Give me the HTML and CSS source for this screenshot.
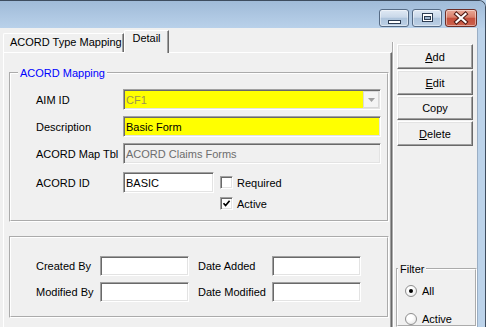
FILE: index.html
```html
<!DOCTYPE html>
<html>
<head>
<meta charset="utf-8">
<title>ACORD Type Mapping</title>
<link rel="stylesheet" href="styles.css">
</head>
<body>
<div class="window">
  <div class="titlebar">
    <div class="capbtn min"><svg width="30" height="18" viewBox="0 0 30 18"><rect x="9.5" y="11.5" width="12" height="3" fill="#fff" stroke="#2c3c52"/></svg></div>
    <div class="capbtn max"><svg width="30" height="18" viewBox="0 0 30 18"><rect x="10.5" y="4.5" width="10" height="8" fill="#fff" stroke="#2c3c52"/><rect x="12.5" y="7.5" width="6" height="3" fill="#9fb6cf" stroke="#2c3c52"/></svg></div>
    <div class="capbtn close"><svg width="32" height="18" viewBox="0 0 32 18"><path d="M11.5 5 L20.5 13 M20.5 5 L11.5 13" stroke="#4e1a14" stroke-width="4.2" stroke-linecap="square"/><path d="M11.5 5 L20.5 13 M20.5 5 L11.5 13" stroke="#fff" stroke-width="2.2" stroke-linecap="square"/></svg></div>
  </div>
  <div class="main">
    <div class="client">
      <div class="leftcol">
        <div class="tabs">
          <div class="tab inactive">ACORD Type Mapping</div>
          <div class="tab active">Detail</div>
        </div>
        <div class="panel">
          <fieldset class="group mapping">
            <legend>ACORD Mapping</legend>
            <div class="gbody">
              <div class="row">
                <span class="lbl">AIM ID</span>
                <div class="field wide yellow combo"><span class="ctext">CF1</span><span class="drop"><svg width="7" height="4" viewBox="0 0 7 4"><path d="M0 0 H7 L3.5 4 Z" fill="#a0a0a0"/></svg></span></div>
              </div>
              <div class="row">
                <span class="lbl">Description</span>
                <div class="field wide yellow">Basic Form</div>
              </div>
              <div class="row">
                <span class="lbl">ACORD Map Tbl</span>
                <div class="field wide ro">ACORD Claims Forms</div>
              </div>
              <div class="row r4">
                <span class="lbl">ACORD ID</span>
                <div class="field idfield">BASIC</div>
                <span class="chk"></span><span class="chklbl">Required</span>
              </div>
              <div class="row r5">
                <span class="chk checked"><svg width="9" height="9" viewBox="0 0 9 9"><path d="M1.5 4.2 L3.6 6.5 L7.6 1.8" fill="none" stroke="#000" stroke-width="1.7"/></svg></span><span class="chklbl">Active</span>
              </div>
            </div>
          </fieldset>
          <fieldset class="group audit">
            <div class="gbody">
              <div class="row">
                <span class="lbl2">Created By</span>
                <div class="field small"></div>
                <span class="lbl3">Date Added</span>
                <div class="field small"></div>
              </div>
              <div class="row">
                <span class="lbl2">Modified By</span>
                <div class="field small"></div>
                <span class="lbl3">Date Modified</span>
                <div class="field small"></div>
              </div>
            </div>
          </fieldset>
        </div>
      </div>
      <div class="rightcol">
        <button class="btn"><u>A</u>dd</button>
        <button class="btn"><u>E</u>dit</button>
        <button class="btn">Copy</button>
        <button class="btn"><u>D</u>elete</button>
        <fieldset class="filter">
          <legend>Filter</legend>
          <div class="radiorow first"><span class="radio on"></span><span>All</span></div>
          <div class="radiorow"><span class="radio"></span><span>Active</span></div>
        </fieldset>
      </div>
    </div>
  </div>
</div>
</body>
</html>
```
FILE: styles.css
```css
* { box-sizing: border-box; }
html, body { margin: 0; padding: 0; width: 486px; height: 327px; overflow: hidden; }
body {
  font-family: "Liberation Sans", Arial, sans-serif;
  font-size: 11px;
  color: #000;
  background: #b9d1ea;
}
.window {
  width: 486px;
  height: 327px;
  border-top: 1px solid #3e4d5f;
  border-right: 1px solid #3e4d5f;
  border-top-right-radius: 7px;
  background: #bcd3ea;
  overflow: hidden;
  display: flex;
  flex-direction: column;
}
.titlebar {
  flex: none;
  height: 27px;
  background: linear-gradient(#a0bbd8, #b9d1ea);
  display: flex;
  justify-content: flex-end;
  align-items: flex-start;
  padding: 8px 8px 0 0;
  gap: 3px;
}
.capbtn {
  width: 30px;
  height: 18px;
  border: 1px solid #566b85;
  border-radius: 3px;
  background: linear-gradient(#e0e9f4 0%, #c9d8e9 45%, #aec4dc 52%, #bcd0e5 100%);
  box-shadow: inset 0 0 0 1px rgba(255,255,255,0.45);
  overflow: hidden;
  display: flex;
  align-items: center;
  justify-content: center;
}
.capbtn svg { display: block; flex: none; }
.capbtn.close {
  width: 32px;
  border-color: #6e2e26;
  background: linear-gradient(#e9a897 0%, #d9806c 45%, #c5503c 52%, #cc624e 100%);
}
.main { flex: 1; display: flex; min-height: 0; }
.client {
  width: 478px;
  flex: none;
  background: #f0f0f0;
  border-right: 1px solid #9aaec4;
  display: flex;
}
.leftcol { width: 392px; flex: none; display: flex; flex-direction: column; }
.tabs {
  flex: none;
  height: 24px;
  display: flex;
  align-items: flex-end;
  padding-left: 3px;
  position: relative;
  z-index: 1;
}
.tab {
  background: #f0f0f0;
  border-top: 1px solid #fff;
  border-left: 1px solid #fff;
  border-right: 1px solid #696969;
  box-shadow: inset -1px 0 #a0a0a0;
  border-top-left-radius: 2px;
  line-height: 13px;
  white-space: nowrap;
  overflow: hidden;
}
.tab.inactive { width: 121px; height: 19px; padding: 2px 0 0 6px; }
.tab.active { width: 45px; height: 23px; margin-bottom: -1px; padding-top: 1px; text-align: center; }
.panel {
  flex: 1;
  margin-left: 3px;
  width: 389px;
  border-top: 1px solid #fff;
  border-left: 1px solid #fff;
  border-right: 1px solid #696969;
  box-shadow: inset -1px 0 #a0a0a0;
}
.group {
  border: 2px groove #fff;
  margin: 0 0 0 5px;
  padding: 0;
  width: 380px;
  min-width: 0;
}
.group legend { line-height: 14px; padding: 0 2px; margin-left: 7px; }
.mapping { margin-top: 13px; }
.mapping legend { color: #0000ff; }
.mapping .gbody { padding: 9px 0 10px 25px; }
.row { display: flex; align-items: center; height: 21px; white-space: nowrap; }
.row + .row { margin-top: 6px; }
.row.r4 { margin-top: 8px; }
.row.r5 { margin-top: 4px; height: 13px; padding-left: 184px; }
.lbl { width: 87px; flex: none; }
.field {
  flex: none;
  height: 21px;
  border: 1px solid;
  border-color: #a0a0a0 #fff #fff #a0a0a0;
  box-shadow: inset 1px 1px #696969, inset -1px -1px #e3e3e3;
  background: #fff;
  padding: 0 1px 0 2px;
  display: flex;
  align-items: center;
  white-space: nowrap;
  overflow: hidden;
}
.wide { width: 258px; }
.yellow { background: #ffff00; }
.ro { background: #f0f0f0; color: #6d6d6d; }
.combo .ctext { flex: 1; color: #9d9550; }
.drop {
  width: 16px;
  height: 17px;
  background: #f4f4f4;
  border: 1px solid #d9d9d9;
  display: flex;
  align-items: center;
  justify-content: center;
}
.drop svg { display: block; }
.idfield { width: 91px; }
.chk {
  flex: none;
  width: 13px;
  height: 13px;
  border: 1px solid;
  border-color: #a0a0a0 #fff #fff #a0a0a0;
  box-shadow: inset 1px 1px #696969, inset -1px -1px #e3e3e3;
  background: #fff;
  display: flex;
  align-items: center;
  justify-content: center;
}
.idfield + .chk { margin-left: 6px; }
.chk svg { display: block; margin: 0 0 0 0; }
.chklbl { margin-left: 4px; }
.audit { margin-top: 14px; }
.audit .gbody { padding: 18px 0 14px 25px; }
.audit .row { height: 20px; }
.field.small { width: 89px; height: 20px; }
.lbl2 { width: 64px; flex: none; }
.lbl3 { width: 74px; flex: none; margin-left: 9px; }
.rightcol {
  width: 85px;
  flex: none;
  margin-top: 14px;
  border-left: 2px groove #fff;
  padding-left: 3px;
  display: flex;
  flex-direction: column;
  align-items: flex-start;
}
.btn {
  width: 76px;
  height: 25px;
  margin: 1px 0 0 0;
  padding: 2px 0 0 0;
  font: inherit;
  line-height: 13px;
  color: #000;
  background: #f0f0f0;
  border: 1px solid;
  border-color: #fff #696969 #696969 #fff;
  box-shadow: inset -1px -1px #a0a0a0, inset 1px 1px #e3e3e3;
  border-radius: 0;
}
.btn:first-child { margin-top: 2px; }
.filter {
  margin: 116px 0 0 -1px;
  width: 81px;
  border: 2px groove #fff;
  padding: 0;
  min-width: 0;
}
.filter legend { line-height: 14px; padding: 0 2px; margin-left: 0; }
.radiorow { display: flex; align-items: center; height: 13px; margin: 15px 0 0 7px; }
.radiorow.first { margin-top: 8px; }
.radio {
  flex: none;
  width: 12px;
  height: 12px;
  border-radius: 50%;
  border: 1px solid #8f8f8f;
  background: radial-gradient(circle at 40% 35%, #fff 30%, #e0e0e0 100%);
  margin-right: 5px;
  display: flex;
  align-items: center;
  justify-content: center;
}
.radio.on::after {
  content: "";
  width: 4px;
  height: 4px;
  border-radius: 50%;
  background: #000;
}
```
